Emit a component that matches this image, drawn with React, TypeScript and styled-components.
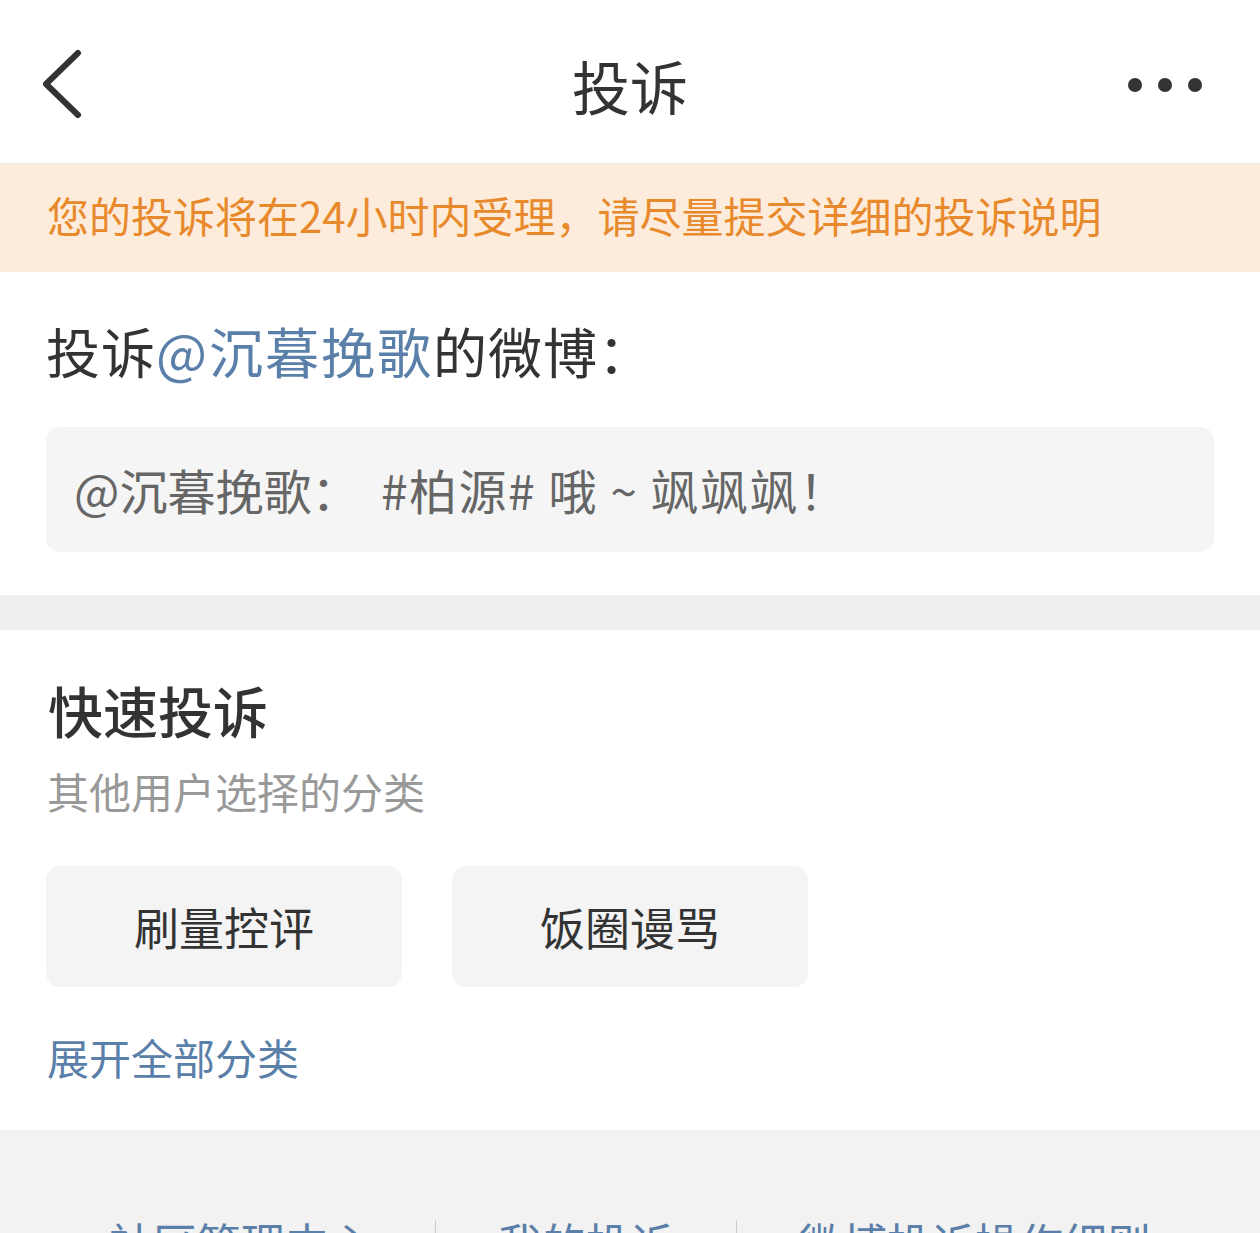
import styled, { createGlobalStyle } from "styled-components";

const GlobalStyle = createGlobalStyle`
  html, body {
    margin: 0;
    padding: 0;
    background: #ffffff;
  }
  body {
    font-family: "Noto Sans CJK SC", "Noto Sans", sans-serif;
    color: #333333;
  }
`;

const Page = styled.div`
  width: 1260px;
  min-height: 1233px;
  display: flex;
  flex-direction: column;
  background: #f2f2f2;
`;

const Header = styled.header`
  height: 163px;
  display: grid;
  grid-template-columns: 1fr auto 1fr;
  align-items: center;
  padding: 0 40px;
  background: #ffffff;
  border-bottom: 1px solid #f1ebe5;
`;

const BackButton = styled.button`
  justify-self: start;
  border: none;
  background: none;
  padding: 0;
  margin-top: 4px;
  display: flex;
  cursor: pointer;
`;

const Title = styled.h1`
  margin: 6px 0 0;
  font-size: 58px;
  line-height: 1;
  font-weight: 400;
  color: #333333;
`;

const MoreButton = styled.button`
  justify-self: end;
  border: none;
  background: none;
  padding: 0;
  margin: 6px 18px 0 0;
  display: flex;
  gap: 16px;
  cursor: pointer;
`;

const Dot = styled.span`
  width: 14px;
  height: 14px;
  border-radius: 50%;
  background: #333333;
`;

const Notice = styled.div`
  height: 108px;
  box-sizing: border-box;
  display: flex;
  align-items: center;
  padding: 0 0 7px 47px;
  background: #fdecdb;
  color: #e88a2c;
  font-size: 42px;
  line-height: 1;
`;

const Section = styled.section<{ $top: number; $bottom: number }>`
  background: #ffffff;
  padding: ${({ $top }) => $top}px 46px ${({ $bottom }) => $bottom}px;
  display: flex;
  flex-direction: column;
  align-items: flex-start;
`;

const Target = styled.h2`
  margin: 0;
  font-size: 54px;
  line-height: 1;
  font-weight: 400;
  color: #333333;
  letter-spacing: 1px;
`;

const Name = styled.span`
  color: #5a80aa;
  letter-spacing: 2px;
`;

const Quote = styled.div`
  align-self: stretch;
  margin-top: 49px;
  height: 125px;
  box-sizing: border-box;
  display: flex;
  align-items: center;
  padding: 0 0 2px 28px;
  border-radius: 14px;
  background: #f5f5f5;
  color: #666666;
  font-size: 48px;
  line-height: 1;
  white-space: pre;
`;

const Topic = styled.span`
  letter-spacing: 1.5px;
`;

const Gap = styled.div`
  height: 35px;
  background: #eeeeee;
`;

const Heading = styled.h3`
  margin: 0 0 0 2px;
  font-size: 55px;
  line-height: 1;
  font-weight: 500;
  color: #333333;
`;

const Hint = styled.p`
  margin: 33px 0 0 1px;
  font-size: 42px;
  line-height: 1;
  color: #999999;
`;

const Chips = styled.div`
  display: flex;
  gap: 50px;
  margin-top: 54px;
`;

const Chip = styled.button`
  width: 356px;
  height: 121px;
  border: none;
  border-radius: 14px;
  background: #f4f4f4;
  color: #333333;
  font-family: inherit;
  font-size: 45px;
  line-height: 1;
  cursor: pointer;
`;

const Expand = styled.a`
  margin: 49px 0 0 1px;
  font-size: 42px;
  line-height: 1;
  color: #5a7fa9;
`;

const Footer = styled.footer`
  flex: 1;
  display: flex;
  justify-content: center;
  align-items: flex-start;
  padding-top: 90px;
  background: #f2f2f2;
`;

const FooterLink = styled.a`
  font-size: 44px;
  line-height: 1;
  color: #5a7fa9;
  padding: 0 62px;
  white-space: nowrap;
  & + & {
    border-left: 1px solid #cccccc;
  }
`;

const categories = ["刷量控评", "饭圈谩骂"];
const links = ["社区管理中心", "我的投诉", "微博投诉操作细则"];

const App = () => {
  return (
    <Page>
      <GlobalStyle />
      <Header>
        <BackButton aria-label="返回">
          <svg width="44" height="70" viewBox="0 0 44 70">
            <path d="M38 4 L6 35 L38 66" fill="none" stroke="#333333" strokeWidth="6" strokeLinecap="round" strokeLinejoin="round" />
          </svg>
        </BackButton>
        <Title>投诉</Title>
        <MoreButton aria-label="更多">
          <Dot />
          <Dot />
          <Dot />
        </MoreButton>
      </Header>
      <Notice>您的投诉将在24小时内受理，请尽量提交详细的投诉说明</Notice>
      <Section $top={52} $bottom={43}>
        <Target>
          投诉<Name>@沉暮挽歌</Name>的微博：
        </Target>
        <Quote>
          @沉暮挽歌：  <Topic>#柏源# 哦 ~ 飒飒飒！</Topic>
        </Quote>
      </Section>
      <Gap />
      <Section $top={52} $bottom={52}>
        <Heading>快速投诉</Heading>
        <Hint>其他用户选择的分类</Hint>
        <Chips>
          {categories.map((c) => (
            <Chip key={c}>{c}</Chip>
          ))}
        </Chips>
        <Expand>展开全部分类</Expand>
      </Section>
      <Footer>
        {links.map((l) => (
          <FooterLink key={l}>{l}</FooterLink>
        ))}
      </Footer>
    </Page>
  );
};

export default App;
